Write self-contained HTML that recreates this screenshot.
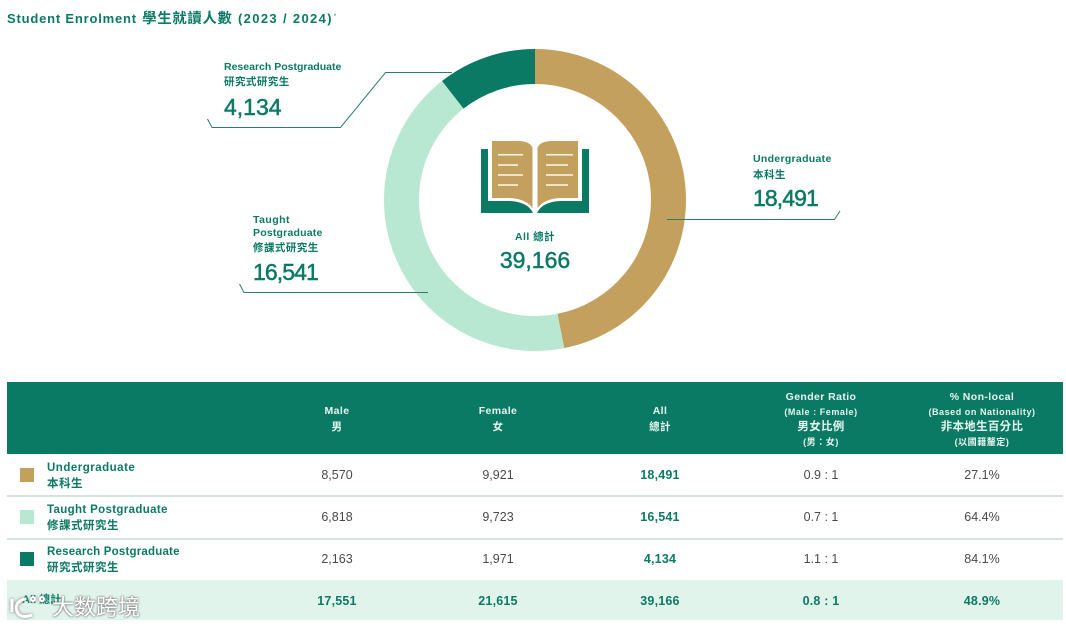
<!DOCTYPE html>
<html><head><meta charset="utf-8">
<style>
html,body{margin:0;padding:0;background:#fff}
#p{position:relative;width:1066px;height:627px;overflow:hidden;background:#fff;font-family:"Liberation Sans","Noto Sans CJK TC",sans-serif;color:#0b7a64}
.t{position:absolute;white-space:nowrap;line-height:1}
.c{position:absolute;white-space:nowrap;line-height:1;text-align:center;width:160px}
.lb{font-size:10.5px;font-weight:700;letter-spacing:.45px}
.big{font-size:23px;font-weight:400;-webkit-text-stroke:.5px #0b7a64}
.h{color:#e6f4ef;font-weight:700;font-size:10.5px;letter-spacing:.4px}
.hc{color:#e6f4ef;font-weight:700;font-size:11.5px;letter-spacing:.3px}
.hs{color:#e6f4ef;font-weight:700;font-size:9px;letter-spacing:.55px}
.n{font-size:12.5px;color:#4a4a4a}
.b{font-size:12.5px;font-weight:700;letter-spacing:.2px;color:#0b7a64}
.rl{font-size:11.5px;font-weight:700;letter-spacing:.5px}
.sw{position:absolute;left:20px;width:14px;height:14px}
.ln{position:absolute;left:7px;width:1056px;height:2px;background:#d3e3df}
</style></head><body>
<div id="p">
<div class="t" style="left:7px;top:12px;font-size:13px;font-weight:700;letter-spacing:.8px">Student Enrolment <span style="font-size:14.3px;letter-spacing:.75px;margin-left:1px">學生就讀人數</span> <span style="letter-spacing:1.35px;margin-left:1px">(2023 / 2024)</span><span style="font-size:6px;vertical-align:5px;font-weight:400;margin-left:1px">*</span></div>

<svg width="1066" height="380" style="position:absolute;left:0;top:0">
<g fill="none" stroke-width="35">
<circle cx="535" cy="200" r="133.5" stroke="#c4a05f" pathLength="100" stroke-dasharray="46.9 53.1" transform="rotate(-90 535 200)"/>
<circle cx="535" cy="200" r="133.5" stroke="#b8e8d2" pathLength="100" stroke-dasharray="42.54 57.46" stroke-dashoffset="-46.9" transform="rotate(-90 535 200)"/>
<circle cx="535" cy="200" r="133.5" stroke="#0b7a64" pathLength="100" stroke-dasharray="10.56 89.44" stroke-dashoffset="-89.44" transform="rotate(-90 535 200)"/>
</g>
<g fill="none" stroke="#2a7d6a" stroke-width="1">
<path d="M207.500 119L212 127.500H340.500L385.500 72.500H452"/>
<path d="M239.500 284L244 292.500H428"/>
<path d="M667 219.500H834.500L840 211"/>
</g>
<path fill="#0b7a64" d="M481 149H488V201H510Q528 202 533 213H481Z"/>
<path fill="#0b7a64" d="M589 149H582V201H560Q542 202 537 213H589Z"/>
<path fill="#c4a05f" d="M492 141H518Q530 141 532.500 148V208Q526 199 510 198H492Z"/>
<path fill="#c4a05f" d="M578 141H552Q540 141 537.500 148V208Q544 199 560 198H578Z"/>
<g stroke="#fbf8f0" stroke-width="1.500">
<path d="M498 154.700H523M498 165H518M498 175H523M498 185H518"/>
<path d="M546 154.700H573M546 165H568M546 175H573M546 185H568"/>
</g>
</svg>

<div class="t lb" style="left:224px;top:62px;letter-spacing:0">Research Postgraduate</div>
<div class="t lb" style="left:224px;top:77px">研究式研究生</div>
<div class="t big" style="left:224px;top:96px">4,134</div>

<div class="t lb" style="left:253px;top:215px">Taught</div>
<div class="t lb" style="left:253px;top:228px;letter-spacing:.2px">Postgraduate</div>
<div class="t lb" style="left:253px;top:243px">修課式研究生</div>
<div class="t big" style="left:253px;top:261px;letter-spacing:-.9px">16,541</div>

<div class="t lb" style="left:753px;top:154px;letter-spacing:.3px">Undergraduate</div>
<div class="t lb" style="left:753px;top:170px">本科生</div>
<div class="t big" style="left:753px;top:187px;letter-spacing:-.9px">18,491</div>

<div class="c lb" style="left:455px;top:232px">All 總計</div>
<div class="c big" style="left:455px;top:249px">39,166</div>

<div style="position:absolute;left:7px;top:382px;width:1056px;height:72px;background:#0b7a64"></div>
<div class="c h" style="left:257px;top:406px">Male</div>
<div class="c h" style="left:257px;top:422px">男</div>
<div class="c h" style="left:418px;top:406px">Female</div>
<div class="c h" style="left:418px;top:422px">女</div>
<div class="c h" style="left:580px;top:406px">All</div>
<div class="c h" style="left:580px;top:422px">總計</div>
<div class="c h" style="left:741px;top:392px">Gender Ratio</div>
<div class="c hs" style="left:741px;top:408px">(Male : Female)</div>
<div class="c hc" style="left:741px;top:422px">男女比例</div>
<div class="c hs" style="left:741px;top:438px">(男：女)</div>
<div class="c h" style="left:902px;top:392px">% Non-local</div>
<div class="c hs" style="left:902px;top:408px">(Based on Nationality)</div>
<div class="c hc" style="left:902px;top:422px">非本地生百分比</div>
<div class="c hs" style="left:902px;top:438px">(以國籍釐定)</div>

<div class="sw" style="top:468px;background:#c4a05f"></div>
<div class="t rl" style="left:47px;top:463px">Undergraduate</div>
<div class="t rl" style="left:47px;top:479px">本科生</div>
<div class="c n" style="left:257px;top:469px">8,570</div>
<div class="c n" style="left:418px;top:469px">9,921</div>
<div class="c b" style="left:580px;top:469px">18,491</div>
<div class="c n" style="left:741px;top:469px">0.9 : 1</div>
<div class="c n" style="left:902px;top:469px">27.1%</div>
<div class="ln" style="top:495px"></div>

<div class="sw" style="top:510px;background:#b8e8d2"></div>
<div class="t rl" style="left:47px;top:505px;letter-spacing:.35px">Taught Postgraduate</div>
<div class="t rl" style="left:47px;top:521px">修課式研究生</div>
<div class="c n" style="left:257px;top:511px">6,818</div>
<div class="c n" style="left:418px;top:511px">9,723</div>
<div class="c b" style="left:580px;top:511px">16,541</div>
<div class="c n" style="left:741px;top:511px">0.7 : 1</div>
<div class="c n" style="left:902px;top:511px">64.4%</div>
<div class="ln" style="top:538px"></div>

<div class="sw" style="top:552px;background:#0b7a64"></div>
<div class="t rl" style="left:47px;top:547px;letter-spacing:.2px">Research Postgraduate</div>
<div class="t rl" style="left:47px;top:563px">研究式研究生</div>
<div class="c n" style="left:257px;top:553px">2,163</div>
<div class="c n" style="left:418px;top:553px">1,971</div>
<div class="c b" style="left:580px;top:553px">4,134</div>
<div class="c n" style="left:741px;top:553px">1.1 : 1</div>
<div class="c n" style="left:902px;top:553px">84.1%</div>

<div style="position:absolute;left:7px;top:580px;width:1056px;height:40px;background:#e1f4ec"></div>
<div class="t" style="left:22px;top:595px;font-size:11px;font-weight:700;color:#0b7a64">All 總計</div>
<div class="c b" style="left:257px;top:595px">17,551</div>
<div class="c b" style="left:418px;top:595px">21,615</div>
<div class="c b" style="left:580px;top:595px">39,166</div>
<div class="c b" style="left:741px;top:595px">0.8 : 1</div>
<div class="c b" style="left:902px;top:595px">48.9%</div>

<svg width="60" height="40" style="position:absolute;left:0;top:590px">
<g fill="none" stroke="#fff" stroke-width="3" style="filter:drop-shadow(0 0 1.500px #777)">
<path d="M12 9V22"/><path d="M26 9Q17 10 16 18Q18 30 32 25"/>
<circle cx="33" cy="9" r="2" stroke-width="2"/><circle cx="42" cy="9" r="2" stroke-width="2"/>
</g>
</svg>
<div class="t" style="left:52px;top:597px;font-size:22px;color:#fff;text-shadow:0 0 2px #777,0 0 2px #777">大数跨境</div>
</div>
</body></html>
